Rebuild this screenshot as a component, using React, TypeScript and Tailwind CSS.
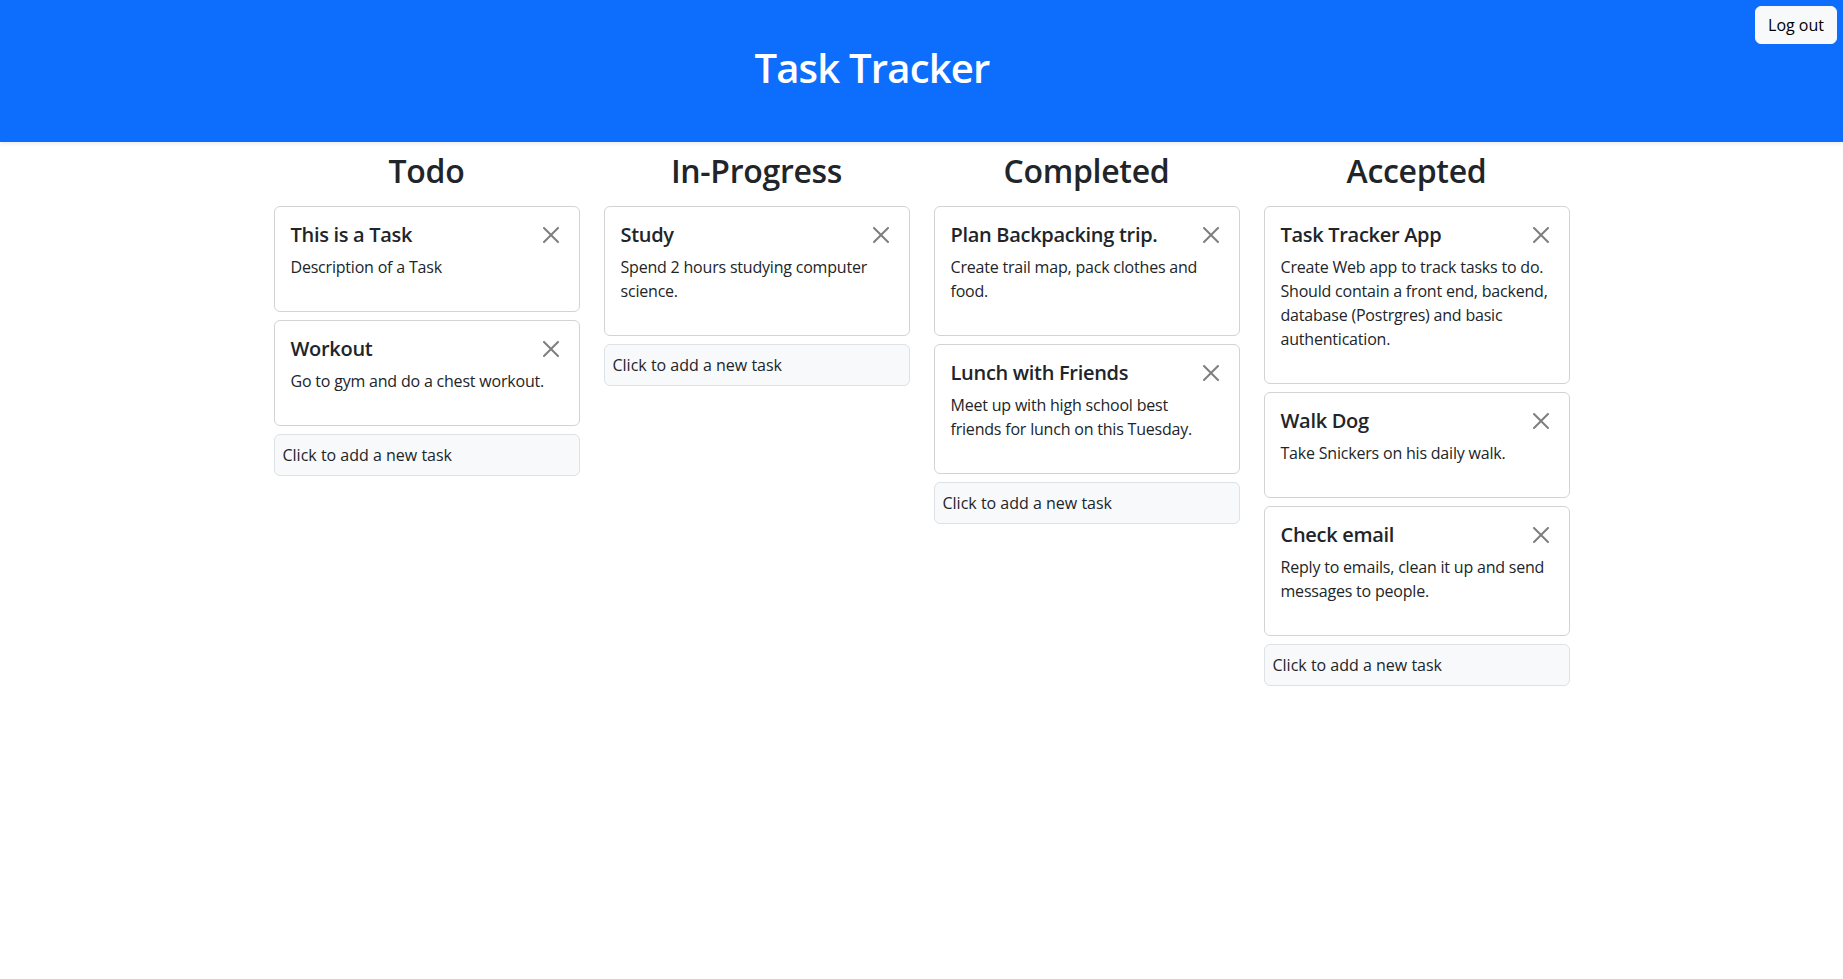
import { type FC } from 'react';

type Task = { title: string; desc: string };

const columns: { name: string; tasks: Task[] }[] = [
  {
    name: 'Todo',
    tasks: [
      { title: 'This is a Task', desc: 'Description of a Task' },
      { title: 'Workout', desc: 'Go to gym and do a chest workout.' },
    ],
  },
  {
    name: 'In-Progress',
    tasks: [{ title: 'Study', desc: 'Spend 2 hours studying computer science.' }],
  },
  {
    name: 'Completed',
    tasks: [
      { title: 'Plan Backpacking trip.', desc: 'Create trail map, pack clothes and food.' },
      { title: 'Lunch with Friends', desc: 'Meet up with high school best friends for lunch on this Tuesday.' },
    ],
  },
  {
    name: 'Accepted',
    tasks: [
      {
        title: 'Task Tracker App',
        desc: 'Create Web app to track tasks to do. Should contain a front end, backend, database (Postrgres) and basic authentication.',
      },
      { title: 'Walk Dog', desc: 'Take Snickers on his daily walk.' },
      { title: 'Check email', desc: 'Reply to emails, clean it up and send messages to people.' },
    ],
  },
];

// bootstrap style close button
const CloseBtn: FC = () => (
  <button className="w-6 h-6 p-1 shrink-0 opacity-50">
    <svg viewBox="0 0 16 16" className="w-4 h-4" fill="#000">
      <path d="M.293.293a1 1 0 0 1 1.414 0L8 6.586 14.293.293a1 1 0 1 1 1.414 1.414L9.414 8l6.293 6.293a1 1 0 0 1-1.414 1.414L8 9.414l-6.293 6.293a1 1 0 0 1-1.414-1.414L6.586 8 .293 1.707a1 1 0 0 1 0-1.414z" />
    </svg>
  </button>
);

const TaskCard: FC<{ task: Task }> = ({ task }) => (
  <div className="bg-white border border-[#d3d3d3] rounded-md p-4 mb-2">
    <div className="flex justify-between items-start mb-2">
      <h5 className="text-[20px] font-semibold leading-[1.2] tracking-[-0.3px]">{task.title}</h5>
      <CloseBtn />
    </div>
    <p className="text-base leading-6 mb-4 tracking-[-0.2px]">{task.desc}</p>
  </div>
);

export default function App() {
  return (
    <div
      className="min-h-screen bg-white text-[#212529]"
      style={{ fontFamily: '"Open Sans", "Noto Sans", sans-serif' }}
    >
      {/* Header */}
      <header className="h-[142px] bg-[#0d6efd] flex shadow-[0_2px_4px_rgba(0,0,0,0.075)]">
        <div className="flex-1 flex items-center justify-center pb-[6px]">
          <h1 className="text-[40px] font-semibold leading-[1.2] tracking-[-0.8px] text-white">Task Tracker</h1>
        </div>
        <div className="w-[99px] flex justify-end pt-[6px] pr-[6px] items-start">
          <button className="bg-[#f8f9fa] border border-[#f8f9fa] rounded-md px-3 py-1.5 text-base leading-6 text-black">
            Log out
          </button>
        </div>
      </header>

      {/* Board */}
      <main className="w-[1296px] mx-auto grid grid-cols-4 gap-6 pt-[10px]">
        {columns.map((col) => (
          <div key={col.name}>
            <h2 className="text-[32px] font-semibold leading-[1.2] tracking-[-0.3px] text-center mb-4">{col.name}</h2>
            {col.tasks.map((t) => (
              <TaskCard key={t.title} task={t} />
            ))}
            <div className="bg-[#f8f9fa] border border-[#dee2e6] rounded-md p-2 text-base leading-6">
              Click to add a new task
            </div>
          </div>
        ))}
      </main>
    </div>
  );
}
